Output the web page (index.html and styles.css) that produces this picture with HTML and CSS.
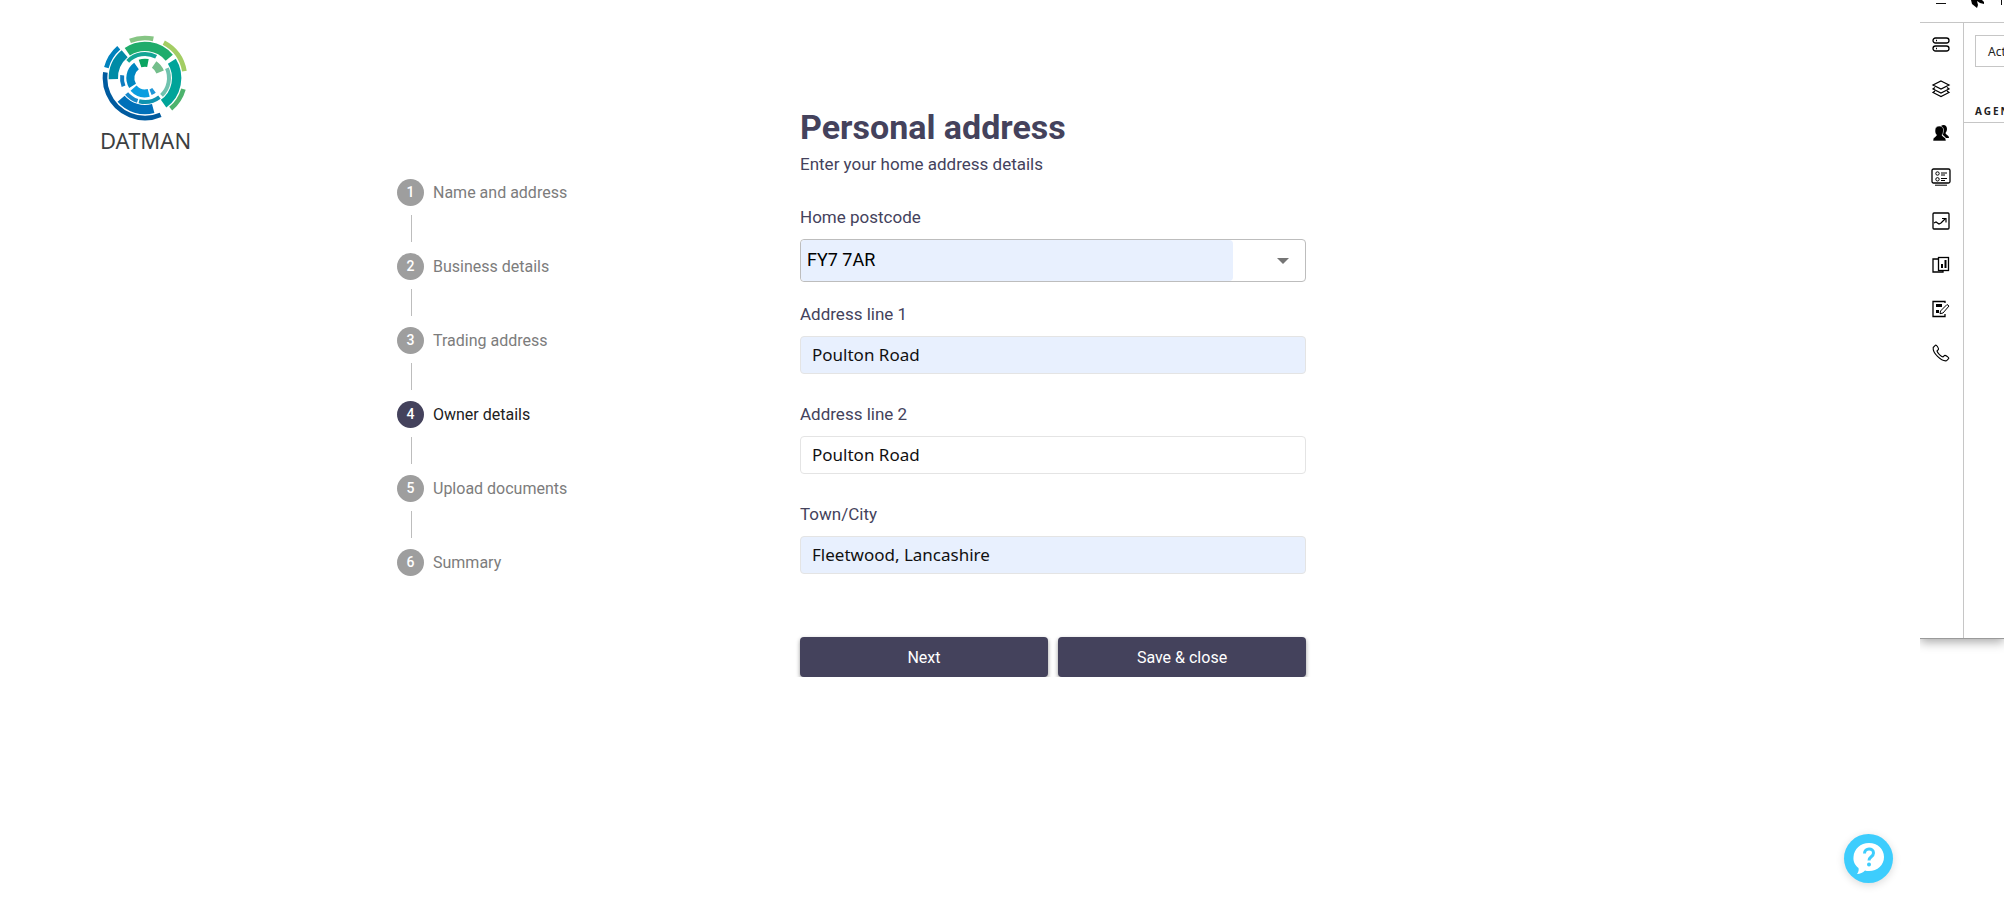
FILE: index.html
```
<!DOCTYPE html>
<html lang="en">
<head>
    <title>Personal address</title>
    <meta charset="utf-8">
    <meta name="viewport" content="width=device-width, initial-scale=1">
    <link rel="stylesheet" href="styles.css">
</head>
<body>
    <div class="page">
        <header class="logo">
            <!-- Rings are dashed circles, one per segment -->
            <svg class="logo-mark" viewBox="-129 -129 258 258" aria-hidden="true">
                <g fill="none" stroke-width="14">
                    <circle r="120" pathLength="360" stroke="#005b9f" stroke-dasharray="121 239" transform="rotate(67)"/>
                    <circle r="120" pathLength="360" stroke="#0082bd" stroke-dasharray="34 326" transform="rotate(195)"/>
                    <circle r="120" pathLength="360" stroke="#86c584" stroke-dasharray="34 326" transform="rotate(248)"/>
                    <circle r="120" pathLength="360" stroke="#a3cd63" stroke-dasharray="52 308" transform="rotate(298)"/>
                    <circle r="120" pathLength="360" stroke="#4db36d" stroke-dasharray="34 326" transform="rotate(16)"/>
                </g>
                <g fill="none" stroke-width="28">
                    <circle r="95" pathLength="360" stroke="#1fac6b" stroke-dasharray="84 276" transform="rotate(236)"/>
                    <circle r="95" pathLength="360" stroke="#00a499" stroke-dasharray="86 274" transform="rotate(328)"/>
                    <circle r="95" pathLength="360" stroke="#0070b9" stroke-dasharray="64 296" transform="rotate(75)"/>
                    <circle r="95" pathLength="360" stroke="#008ba6" stroke-dasharray="52 308" transform="rotate(178)"/>
                </g>
                <g fill="none" stroke-width="12">
                    <circle r="72" pathLength="360" stroke="#12a594" stroke-dasharray="73 287" transform="rotate(224)"/>
                    <circle r="72" pathLength="360" stroke="#6fc2ae" stroke-dasharray="70 290" transform="rotate(336)"/>
                    <circle r="72" pathLength="360" stroke="#0e93b0" stroke-dasharray="51 309" transform="rotate(53)"/>
                    <circle r="72" pathLength="360" stroke="#1689cc" stroke-dasharray="32 328" transform="rotate(108)"/>
                    <circle r="69" pathLength="360" stroke="#0f7cc0" stroke-dasharray="28 332" transform="rotate(159)"/>
                </g>
                <g fill="none" stroke-width="24">
                    <circle r="46" pathLength="360" stroke="#0aa561" stroke-dasharray="30 330" transform="rotate(251)"/>
                    <circle r="49" pathLength="360" stroke="#74be8b" stroke-dasharray="34 326" transform="rotate(304)"/>
                    <circle r="44" pathLength="360" stroke="#0087c1" stroke-dasharray="86 274" transform="rotate(148)"/>
                    <circle r="46" pathLength="360" stroke="#0a9ee0" stroke-dasharray="62 298" transform="rotate(76)"/>
                    <circle r="46" pathLength="360" stroke="#1f97d8" stroke-width="18" stroke-dasharray="15 345" transform="rotate(54)"/>
                </g>
            </svg>
            <span class="logo-name">DATMAN</span>
        </header>

        <ol class="steps">
            <li class="step"><span class="step-number">1</span>Name and address</li>
            <li class="step"><span class="step-number">2</span>Business details</li>
            <li class="step"><span class="step-number">3</span>Trading address</li>
            <li class="step active" aria-current="step"><span class="step-number">4</span>Owner details</li>
            <li class="step"><span class="step-number">5</span>Upload documents</li>
            <li class="step"><span class="step-number">6</span>Summary</li>
        </ol>

        <form class="address-form">
            <h1>Personal address</h1>
            <p class="intro">Enter your home address details</p>

            <label for="postcode">Home postcode</label>
            <div class="combo">
                <input type="text" id="postcode" value="FY7 7AR">
                <button type="button" class="combo-toggle" aria-label="Open address list">
                    <svg viewBox="0 0 12 6" width="12" height="6"><path d="M0 0h12l-6 6z" fill="#757575"/></svg>
                </button>
            </div>

            <label for="line1">Address line 1</label>
            <input type="text" id="line1" class="field filled" value="Poulton Road">

            <label for="line2">Address line 2</label>
            <input type="text" id="line2" class="field" value="Poulton Road">

            <label for="town">Town/City</label>
            <input type="text" id="town" class="field filled" value="Fleetwood, Lancashire">

            <div class="actions">
                <button type="submit">Next</button>
                <button type="button">Save &amp; close</button>
            </div>
        </form>
    </div>

    <!-- Back office window, running off the right edge -->
    <aside class="window">
        <div class="window-bar">
            <svg width="84" height="22" viewBox="0 0 84 22">
                <path d="M16 3.500h10" stroke="#111"/>
                <path d="M51 0h11l2 2v2l-4-1-3-2 1 4-1 3-5-4z" fill="#000"/>
                <path d="M81.500 0v5" stroke="#111"/>
            </svg>
        </div>
        <nav class="window-nav">
            <a href="#" aria-label="Orders">
                <svg viewBox="0 0 18 18"><rect x="1" y="2" width="16" height="5" rx="2.500"/><rect x="1" y="10" width="16" height="5" rx="2.500"/><path d="M4 4.500h1M4 12.500h1"/></svg>
            </a>
            <a href="#" aria-label="Layers">
                <svg viewBox="0 0 18 18"><path d="M9 1l8 4-8 4-8-4zM3 7.500L1 9l8 4 8-4-2-1.500M3 11l-2 1.500 8 4 8-4-2-1.500" stroke-width="1.200"/></svg>
            </a>
            <a href="#" aria-label="Customers">
                <svg viewBox="0 0 18 18"><path d="M9 2c2-2 6-1.500 6 3 0 2-1 3-1.500 4 .5 2 3.500 2 3.500 5h-3l-4-4z" fill="#000" stroke="none"/><path d="M7 2c3 0 5 2 4.500 5-.2 2-.8 3-1.500 4 .5 2 4 2 4 5v1H1v-1c0-3 3-3 3.500-5C3 9.500 3 8 3 6c0-2.500 2-4 4-4z" fill="#000" stroke="#fff" stroke-width=".6"/></svg>
            </a>
            <a href="#" aria-label="Menu board">
                <svg viewBox="0 0 18 18"><rect x="0" y="1" width="18" height="14" rx="1.500"/><path d="M3 17.200h12M9 5h6M9 7h4M9 10.500h6M9 12.500h4" stroke-width="1"/><circle cx="5.500" cy="5.500" r="1.700" stroke-width="1"/><circle cx="5.500" cy="11.300" r="1.700" stroke-width="1"/></svg>
            </a>
            <a href="#" aria-label="Trends">
                <svg viewBox="0 0 18 18"><rect x="1" y="1" width="16" height="16" rx="1"/><path d="M2 11l2-1 3 2 2-1 4-4M10 6.500h4v4" stroke-width="1.200"/></svg>
            </a>
            <a href="#" aria-label="Reports">
                <svg viewBox="0 0 18 18"><path d="M6 3H1v13h10v-2"/><rect x="6.500" y="1.500" width="10" height="13"/><path d="M10 12V8M13.500 12V4" stroke-width="2"/></svg>
            </a>
            <a href="#" aria-label="Edit page">
                <svg viewBox="0 0 18 18"><path d="M13 3V1.500H1v15h12V14"/><path d="M4 5.500h6M4 11.500h3" stroke-width="3"/><path d="M15 4.500l2 1.500-6 7-3 .7.500-2.700z" stroke-width="1"/></svg>
            </a>
            <a href="#" aria-label="Calls">
                <svg viewBox="0 0 18 18"><path d="M1.200 3.500L3.500 1.200c1-.5 3.500 3.300 3 4.300L5 7c.5 2 4 5.500 6 6l1.500-1.500c1-.5 4.800 2 4.300 3l-2.300 2.300C9 17.500.5 9 1.200 3.500z" stroke-width="1.100"/></svg>
            </a>
        </nav>
        <div class="window-body">
            <div class="window-tools"><button type="button">Active</button></div>
            <div class="window-heading">AGENTS</div>
        </div>
    </aside>

    <button type="button" class="help" aria-label="Help">
        <svg viewBox="0 0 49 49" width="49" height="49">
            <path d="M25 9c8.500 0 15 6 15 14s-6.500 14-15 14c-1.500 0-3 0-4-.5-2 2-5 3.500-8 3.500 1.500-2 2-4 1.500-6C11 31.500 9 27.500 9.500 23 10 15 16.500 9 25 9z" fill="#fff"/>
            <path d="M20.500 19.500c0-6 9-6 9-.5 0 4-4.500 3.500-4.500 7.500" fill="none" stroke="#3dcdfd" stroke-width="3"/>
            <circle cx="25" cy="30.500" r="2" fill="#3dcdfd"/>
        </svg>
    </button>
</body>
</html>
```
FILE: styles.css
```
* {
    box-sizing: border-box;
}

body {
    margin: 0;
    background: #fff;
    color: #44425c;
    font-family: Roboto, sans-serif;
    overflow-x: hidden;
}

.page {
    display: grid;
    grid-template-columns: 297fr 403fr 506fr 698fr;
    align-items: start;
    padding-left: 100px;
}

/* Logo */
.logo {
    display: flex;
    flex-direction: column;
    align-items: flex-start;
    padding-top: 35px;
}

.logo-mark {
    width: 86px;
    height: 86px;
    margin-left: 2px;
}

.logo-name {
    color: #3c3f42;
    font-family: "Noto Sans", sans-serif;
    font-size: 22px;
    line-height: 38px;
}

/* Steps */
.steps {
    list-style: none;
    margin: 0;
    padding: 179px 0 0;
    display: flex;
    flex-direction: column;
    gap: 11px;
}

.step {
    display: grid;
    grid-template-columns: 27px 1fr;
    column-gap: 9px;
    row-gap: 9px;
    align-items: center;
    color: #7c7c7c;
    font-size: 16px;
    line-height: 27px;
}

.step:not(:last-child)::after {
    content: "";
    width: 1px;
    height: 27px;
    margin-left: 14px;
    background: #bdbdbd;
}

.step-number {
    width: 27px;
    height: 27px;
    border-radius: 50%;
    background: #9e9e9e;
    color: #fff;
    font-size: 14px;
    font-weight: 500;
    text-align: center;
}

.step.active {
    color: #212121;
}

.step.active .step-number {
    background: #44425c;
}

/* Form */
.address-form {
    display: flex;
    flex-direction: column;
    padding-top: 107px;
}

h1 {
    margin: 0;
    font-size: 34px;
    line-height: 40px;
}

.intro {
    margin: 5px 0 29px;
    font-size: 17px;
    line-height: 24px;
}

label {
    margin-bottom: 10px;
    font-size: 17px;
    line-height: 24px;
}

.combo {
    display: flex;
    height: 43px;
    margin-bottom: 20px;
    border: 1px solid #bdbdbd;
    border-radius: 4px;
}

.combo input {
    flex: 1;
    min-width: 0;
    padding: 0 6px 2px;
    border: 0;
    border-radius: 4px;
    background: #e8f0fe;
    color: #000;
    font-family: Roboto, sans-serif;
    font-size: 18px;
}

.combo-toggle {
    width: 72px;
    padding: 0 0 0 28px;
    border: 0;
    background: none;
}

.combo-toggle svg {
    vertical-align: middle;
}

.field {
    height: 38px;
    margin-bottom: 28px;
    padding: 0 11px 1px;
    border: 1px solid #e4e4e4;
    border-radius: 4px;
    background: #fff;
    color: #111;
    font-family: "Noto Sans", sans-serif;
    font-size: 17px;
}

.field.filled {
    background: #e8f0fe;
}

.actions {
    display: flex;
    gap: 10px;
    margin-top: 35px;
}

.actions button {
    flex: 1;
    height: 40px;
    border: 0;
    border-radius: 4px;
    background: #44425c;
    box-shadow: 0 2px 4px rgba(0, 0, 0, 0.4);
    color: #fff;
    font-family: Roboto, sans-serif;
    font-size: 16px;
}

/* Window over the right edge of the page */
.window {
    position: absolute;
    top: 0;
    right: 0;
    width: 84px;
    height: 639px;
    display: grid;
    grid-template: 23px 1fr / 44px 1fr;
    clip-path: inset(0 0 -16px 0);
    background: #fff;
    border-bottom: 1px solid #9a9a9a;
    box-shadow: 0 3px 10px rgba(0, 0, 0, 0.35);
    font-family: "Noto Sans", sans-serif;
    color: #222;
}

.window-bar {
    grid-column: 1 / -1;
    border-bottom: 1px solid #c6c6c6;
}

.window-bar svg {
    display: block;
}

.window-nav {
    display: flex;
    flex-direction: column;
    align-items: center;
    gap: 26px;
    padding-top: 13px;
    padding-right: 1px;
    border-right: 1px solid #c6c6c6;
}

.window-nav svg {
    display: block;
    width: 18px;
    height: 18px;
    overflow: visible;
    fill: none;
    stroke: #000;
    stroke-width: 1.3;
}

.window-body {
    overflow: hidden;
}

.window-tools {
    padding: 12px 0 0 11px;
}

.window-tools button {
    width: 100px;
    height: 32px;
    padding: 0 12px;
    border: 1px solid #c6c6c6;
    background: #fff;
    color: #222;
    font-family: "Noto Sans", sans-serif;
    font-size: 12px;
    text-align: left;
}

.window-heading {
    margin-top: 34px;
    padding: 0 0 0 11px;
    border-bottom: 1px solid #c6c6c6;
    font-size: 10px;
    font-weight: 700;
    letter-spacing: 2px;
    line-height: 21px;
}

/* Help */
.help {
    position: fixed;
    right: 111px;
    bottom: 22px;
    width: 49px;
    height: 49px;
    padding: 0;
    border: 0;
    border-radius: 50%;
    background: #3dcdfd;
    box-shadow: 0 2px 8px rgba(0, 0, 0, 0.15);
}

.help svg {
    display: block;
}
```
